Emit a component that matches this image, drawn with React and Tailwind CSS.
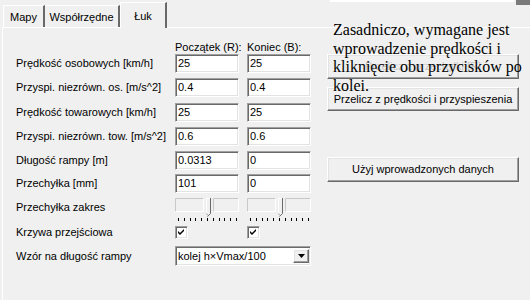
import React from 'react'

const sunken = 'bg-white border border-t-[#a0a0a0] border-l-[#a0a0a0] border-b-white border-r-white shadow-[inset_1px_1px_0_#696969,inset_-1px_-1px_0_#e3e3e3]'
const raised = 'bg-[#f0f0f0] border border-t-white border-l-white border-b-[#696969] border-r-[#696969] shadow-[inset_-1px_-1px_0_#a0a0a0,inset_1px_1px_0_#e3e3e3]'

function Field({ value }) {
  return (
    <div className={`w-[64px] h-[19px] ${sunken} pl-[2px] flex items-center text-[11px] leading-none`}>
      {value}
    </div>
  )
}

function Slider() {
  const ticks = Array.from({ length: 11 }, (_, i) => 3 + i * 5.8)
  return (
    <svg width="64" height="27" viewBox="0 0 64 27">
      <path d="M0.5 14.5 V1.5 H28.5" stroke="#c8c8c8" fill="none" />
      <path d="M0.5 14.5 H28.5 V1.5" stroke="#ffffff" fill="none" />
      <path d="M38.5 14.5 V1.5 H63.5" stroke="#c8c8c8" fill="none" />
      <path d="M38.5 14.5 H63.5 V1.5" stroke="#ffffff" fill="none" />
      <path d="M31.5 16 V1.5 H35.5" stroke="#ffffff" fill="none" />
      <path d="M35.5 1 V16.5 L32.5 19.5" stroke="#696969" fill="none" />
      <path d="M31.5 16.5 L33 18.5" stroke="#a0a0a0" fill="none" />
      {ticks.map((x) => (
        <line key={x} x1={Math.round(x) + 0.5} y1="21" x2={Math.round(x) + 0.5} y2="24" stroke="#000" />
      ))}
    </svg>
  )
}

function Check() {
  return (
    <div className={`w-[13px] h-[13px] ${sunken} flex items-center justify-center`}>
      <svg width="7" height="7" viewBox="0 0 7 7">
        <path d="M0 2 L2 4 L6 0 V2 L2 6 L0 4 Z" fill="#000" />
      </svg>
    </div>
  )
}

function Row({ label, top, h, children }) {
  return (
    <div className={`flex items-center ${top} ${h}`}>
      <div className="w-[159px] text-[11px] leading-none whitespace-nowrap">{label}</div>
      <div className="flex gap-[8px] items-center">{children}</div>
    </div>
  )
}

export default function App() {
  return (
    <div
      className="relative w-[530px] h-[300px] bg-[#f0f0f0] overflow-hidden text-black flex flex-col"
      style={{ fontFamily: '"Liberation Sans", Arial, sans-serif' }}
    >
      {/* tab strip */}
      <div className="flex items-end h-[27px] pl-[3px] text-[11px] leading-none">
        <div className="w-[42px] h-[22px] border-t border-l border-t-white border-l-white border-r-2 border-r-[#696969] flex items-center justify-center pt-[2px]">
          Mapy
        </div>
        <div className="w-[75px] h-[22px] border-t border-t-white border-r-2 border-r-[#696969] flex items-center justify-center pt-[2px]">
          Współrzędne
        </div>
        <div className="relative z-10 -mb-[1px] w-[47px] h-[26px] bg-[#f0f0f0] border-t border-l border-t-white border-l-white border-r-2 border-r-[#696969] flex items-start justify-center pt-[8px]">
          Łuk
        </div>
        <div className="ml-auto self-start w-[184px] h-[2px] bg-white" />
        <div className="ml-[2px] self-start w-[14px] h-[5px] bg-[#7a7a7a]" />
      </div>

      {/* panel */}
      <div className="flex-1 ml-[2px] border-t border-l border-white flex">
        <div className="pl-[13px] w-[309px] flex flex-col">
          <div className="flex mt-[12px] h-[14px] items-center text-[11px] leading-none">
            <div className="w-[159px]" />
            <div className="w-[72px]">Początek (R):</div>
            <div>Koniec (B):</div>
          </div>
          <Row label="Prędkość osobowych [km/h]" top="mt-[0px]" h="h-[19px]">
            <Field value="25" />
            <Field value="25" />
          </Row>
          <Row label="Przyspi. niezrówn. os. [m/s^2]" top="mt-[5px]" h="h-[19px]">
            <Field value="0.4" />
            <Field value="0.4" />
          </Row>
          <Row label="Prędkość towarowych [km/h]" top="mt-[6px]" h="h-[19px]">
            <Field value="25" />
            <Field value="25" />
          </Row>
          <Row label="Przyspi. niezrówn. tow. [m/s^2]" top="mt-[5px]" h="h-[19px]">
            <Field value="0.6" />
            <Field value="0.6" />
          </Row>
          <Row label="Długość rampy [m]" top="mt-[5px]" h="h-[19px]">
            <Field value="0.0313" />
            <Field value="0" />
          </Row>
          <Row label="Przechyłka [mm]" top="mt-[4px]" h="h-[19px]">
            <Field value="101" />
            <Field value="0" />
          </Row>
          <div className="flex mt-[4px] h-[27px]">
            <div className="w-[159px] text-[11px] leading-none whitespace-nowrap pt-[5px]">Przechyłka zakres</div>
            <div className="flex gap-[8px]">
              <Slider />
              <Slider />
            </div>
          </div>
          <Row label="Krzywa przejściowa" top="mt-[2px]" h="h-[13px]">
            <div className="w-[64px]"><Check /></div>
            <div className="w-[64px]"><Check /></div>
          </Row>
          <Row label="Wzór na długość rampy" top="mt-[7px]" h="h-[20px]">
            <div className={`w-[136px] h-[20px] ${sunken} flex items-center justify-between pl-[2px] pr-[1px] text-[11px] leading-none`}>
              <span>kolej h×Vmax/100</span>
              <div className={`w-[16px] h-[14px] ${raised} flex items-center justify-center`}>
                <svg width="7" height="4" viewBox="0 0 7 4">
                  <path d="M0 0 H7 L3.5 4 Z" fill="#000" />
                </svg>
              </div>
            </div>
          </Row>
        </div>

        <div className="ml-[15px] flex flex-col text-[11px] leading-none">
          <div className={`mt-[26px] w-[192px] h-[25px] ${raised} flex items-center justify-center text-[#c8c8c8]`}>
            Przelicz z przechyłki [R]
          </div>
          <div className={`mt-[8px] w-[192px] h-[24px] ${raised} flex items-center justify-center`}>
            Przelicz z prędkości i przyspieszenia
          </div>
          <div className={`mt-[46px] w-[192px] h-[25px] ${raised} flex items-center justify-center`}>
            Użyj wprowadzonych danych
          </div>
        </div>
      </div>

      {/* overlaying transparent label */}
      <div
        className="absolute left-[333px] top-[21px] text-[16px] leading-[18.5px] whitespace-nowrap pointer-events-none"
        style={{ fontFamily: '"Liberation Serif", "Times New Roman", serif' }}
      >
        <div>Zasadniczo, wymagane jest</div>
        <div>wprowadzenie prędkości i</div>
        <div>kliknięcie obu przycisków po</div>
        <div>kolei.</div>
      </div>
    </div>
  )
}
